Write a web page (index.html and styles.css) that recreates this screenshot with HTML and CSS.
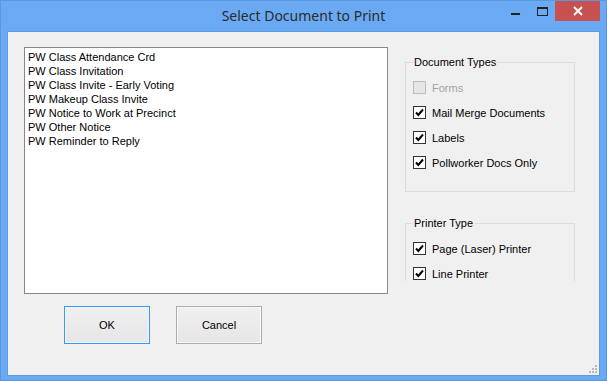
FILE: index.html
```html
<!doctype html>
<html>

<head>
    <meta charset="utf8">
    <title>Select Document to Print</title>
    <link rel="stylesheet" href="styles.css">
</head>

<body>
    <div class="window">
        <div class="titlebar">
            <div></div>
            <div class="title">Select Document to Print</div>
            <div class="controls">
                <a class="ctl ctl-min"><span class="dash"></span></a>
                <a class="ctl ctl-max"><span class="box"></span></a>
                <a class="ctl ctl-close">
                    <svg width="10" height="10" viewBox="0 0 10 10">
                        <path d="M1 1 L9 9 M9 1 L1 9" stroke="#fff" stroke-width="2" fill="none" />
                    </svg>
                </a>
            </div>
        </div>
        <div class="client">
            <div class="main">
                <ul class="listbox">
                    <li>PW Class Attendance Crd</li>
                    <li>PW Class Invitation</li>
                    <li>PW Class Invite - Early Voting</li>
                    <li>PW Makeup Class Invite</li>
                    <li>PW Notice to Work at Precinct</li>
                    <li>PW Other Notice</li>
                    <li>PW Reminder to Reply</li>
                </ul>
                <div class="buttons">
                    <a class="btn btn-default">OK</a>
                    <a class="btn">Cancel</a>
                </div>
            </div>
            <div class="side">
                <fieldset class="group">
                    <legend>Document Types</legend>
                    <label class="check disabled"><span class="cb"></span>Forms</label>
                    <label class="check"><span class="cb on"><svg width="11" height="11" viewBox="0 0 11 11"><path d="M2 5.5 L4.3 8 L9 2.5" stroke="#000" stroke-width="2" fill="none" /></svg></span>Mail Merge Documents</label>
                    <label class="check"><span class="cb on"><svg width="11" height="11" viewBox="0 0 11 11"><path d="M2 5.5 L4.3 8 L9 2.5" stroke="#000" stroke-width="2" fill="none" /></svg></span>Labels</label>
                    <label class="check"><span class="cb on"><svg width="11" height="11" viewBox="0 0 11 11"><path d="M2 5.5 L4.3 8 L9 2.5" stroke="#000" stroke-width="2" fill="none" /></svg></span>Pollworker Docs Only</label>
                </fieldset>
                <fieldset class="group printer">
                    <legend>Printer Type</legend>
                    <label class="check"><span class="cb on"><svg width="11" height="11" viewBox="0 0 11 11"><path d="M2 5.5 L4.3 8 L9 2.5" stroke="#000" stroke-width="2" fill="none" /></svg></span>Page (Laser) Printer</label>
                    <label class="check"><span class="cb on"><svg width="11" height="11" viewBox="0 0 11 11"><path d="M2 5.5 L4.3 8 L9 2.5" stroke="#000" stroke-width="2" fill="none" /></svg></span>Line Printer</label>
                </fieldset>
            </div>
            <svg class="grip" width="9" height="9" viewBox="0 0 9 9">
                <rect x="6" y="0" width="2" height="2" fill="#b9b9b9" />
                <rect x="3" y="3" width="2" height="2" fill="#b9b9b9" />
                <rect x="6" y="3" width="2" height="2" fill="#b9b9b9" />
                <rect x="0" y="6" width="2" height="2" fill="#b9b9b9" />
                <rect x="3" y="6" width="2" height="2" fill="#b9b9b9" />
                <rect x="6" y="6" width="2" height="2" fill="#b9b9b9" />
            </svg>
        </div>
    </div>
</body>

</html>
```

FILE: styles.css
```css
    * {
        font-family: 'Liberation Sans', Arial, sans-serif;
        box-sizing: border-box;
    }
    html,
    body {
        margin: 0px;
        padding: 0px;
        background-color: #6aaaf4;
    }

    .window {
        width: 607px;
        height: 381px;
        border: 1px solid #5b96dc;
        background-color: #6aaaf4;
        display: flex;
        flex-direction: column;
    }

    .titlebar {
        height: 30px;
        display: grid;
        grid-template-columns: 1fr auto 1fr;
    }

    .title {
        font-family: 'Noto Sans', 'Open Sans', sans-serif;
        font-size: 14px;
        color: #2b2b2b;
        line-height: 30px;
        padding-top: 0px;
    }

    .controls {
        display: flex;
        justify-content: flex-end;
        align-items: flex-start;
        padding-right: 6px;
    }

    .ctl {
        display: flex;
        justify-content: center;
        height: 20px;
    }

    .ctl-min { width: 27px; }
    .ctl-max { width: 26px; }

    .ctl-min .dash {
        width: 9px;
        height: 2px;
        margin-top: 12px;
        background-color: #222;
    }

    .ctl-max .box {
        width: 11px;
        height: 9px;
        margin-top: 6px;
        border: 1px solid #222;
        border-top-width: 2px;
    }

    .ctl-close {
        width: 45px;
        background-color: #c75050;
        align-items: center;
    }

    .client {
        flex: 1;
        margin: 0px 6px 4px 6px;
        border: 1px solid #5e9ae2;
        background-color: #f0f0f0;
        padding: 15px 0px 0px 16px;
        display: flex;
        position: relative;
    }

    .main {
        width: 364px;
    }

    .listbox {
        margin: 0px;
        padding: 2px 3px;
        list-style: none;
        height: 247px;
        background-color: #fff;
        border: 1px solid #828790;
    }

    .listbox li {
        font-size: 11px;
        line-height: 14px;
        color: #000;
        white-space: nowrap;
    }

    .buttons {
        display: flex;
        gap: 26px;
        padding: 12px 0px 0px 40px;
    }

    .btn {
        width: 86px;
        height: 38px;
        border: 1px solid #adadad;
        box-shadow: inset 0px 0px 0px 1px #f7f7f7;
        background: linear-gradient(#f0f0f0, #e6e6e6);
        font-size: 11px;
        color: #000;
        display: flex;
        align-items: center;
        justify-content: center;
    }

    .btn-default {
        border-color: #3399ff;
    }

    .side {
        width: 170px;
        height: 234px;
        margin-left: 17px;
        overflow: hidden;
    }

    .group {
        margin: 9px 0px 0px 0px;
        padding: 6px 0px 16px 7px;
        border: 1px solid #dcdcdc;
        min-width: 0px;
    }

    .group legend {
        padding: 0px 1px;
        font-size: 11px;
        line-height: 13px;
        color: #000;
    }

    .printer {
        margin-top: 25px;
    }

    .check {
        display: flex;
        align-items: center;
        height: 25px;
        font-size: 11px;
        color: #000;
    }

    .cb {
        width: 13px;
        height: 13px;
        border: 1px solid #333;
        background-color: #fff;
        margin-right: 6px;
        display: flex;
    }

    .disabled {
        color: #a3a3a3;
    }

    .disabled .cb {
        border-color: #bcbcbc;
        background-color: #e6e6e6;
    }

    .grip {
        position: absolute;
        right: 1px;
        bottom: 1px;
    }
```
